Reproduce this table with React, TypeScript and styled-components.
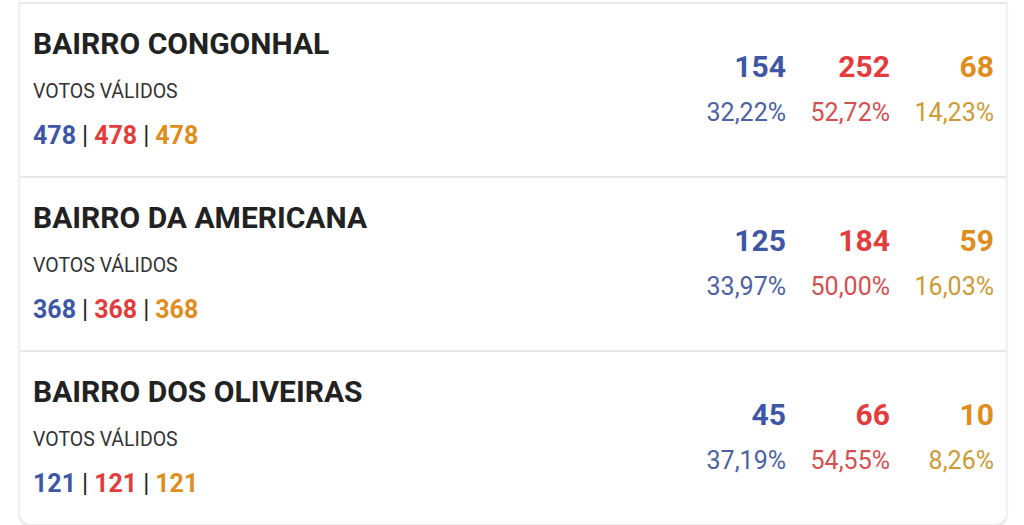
import styled, { createGlobalStyle } from 'styled-components';

const GlobalStyle = createGlobalStyle`
  body {
    margin: 0;
    background: #ffffff;
    font-family: Roboto, "Liberation Sans", Arial, sans-serif;
  }
`;

const colors = {
  blue: '#3d57a6',
  red: '#e23c3c',
  orange: '#df8d1c',
  blueSoft: '#4b62a6',
  redSoft: '#d64f4f',
  orangeSoft: '#cf9a35',
};

type Party = 'blue' | 'red' | 'orange';

const Page = styled.div`
  padding: 0 17px 4px 19px;
`;

const Card = styled.div`
  background: #ffffff;
  border: 1px solid #ececec;
  border-top: none;
  border-radius: 0 0 12px 12px;
  box-shadow: 0 2px 3px rgba(0, 0, 0, 0.12);
  padding-top: 2px;
`;

const Row = styled.div`
  display: flex;
  align-items: center;
  justify-content: space-between;
  height: 172px;
  padding: 0 12px 0 13px;
  border-top: 2px solid #e8e8e8;
`;

const Info = styled.div`
  display: flex;
  flex-direction: column;
  padding-bottom: 2px;
`;

const Title = styled.h2`
  margin: 0;
  font-size: 30px;
  line-height: 34px;
  font-weight: 700;
  color: #222222;
`;

const Subtitle = styled.div`
  margin-top: 20px;
  font-size: 19.5px;
  line-height: 22px;
  color: #333333;
`;

const Totals = styled.div`
  margin-top: 18px;
  font-size: 25px;
  line-height: 30px;
  font-weight: 700;
  color: #222222;
`;

const Total = styled.span<{ $party: Party }>`
  color: ${p => colors[p.$party]};
`;

const Sep = styled.span`
  font-weight: 400;
  margin: 0 6px;
`;

const Results = styled.div`
  display: flex;
  padding-bottom: 4px;
`;

const Column = styled.div`
  width: 104px;
  display: flex;
  flex-direction: column;
  align-items: flex-end;
`;

const Votes = styled.div<{ $party: Party }>`
  font-size: 30px;
  line-height: 34px;
  font-weight: 700;
  color: ${p => colors[p.$party]};
`;

const Percent = styled.div<{ $party: Party }>`
  margin-top: 15px;
  font-size: 25px;
  line-height: 28px;
  color: ${p => colors[(p.$party + 'Soft') as keyof typeof colors]};
`;

interface Bairro {
  name: string;
  total: number;
  votes: [number, number, number];
  percents: [string, string, string];
}

const bairros: Bairro[] = [
  { name: 'BAIRRO CONGONHAL', total: 478, votes: [154, 252, 68], percents: ['32,22%', '52,72%', '14,23%'] },
  { name: 'BAIRRO DA AMERICANA', total: 368, votes: [125, 184, 59], percents: ['33,97%', '50,00%', '16,03%'] },
  { name: 'BAIRRO DOS OLIVEIRAS', total: 121, votes: [45, 66, 10], percents: ['37,19%', '54,55%', '8,26%'] },
];

const parties: Party[] = ['blue', 'red', 'orange'];

export default function App() {
  return (
    <>
      <GlobalStyle />
      <Page>
        <Card>
          {bairros.map(b => (
            <Row key={b.name}>
              <Info>
                <Title>{b.name}</Title>
                <Subtitle>VOTOS VÁLIDOS</Subtitle>
                <Totals>
                  <Total $party="blue">{b.total}</Total>
                  <Sep>|</Sep>
                  <Total $party="red">{b.total}</Total>
                  <Sep>|</Sep>
                  <Total $party="orange">{b.total}</Total>
                </Totals>
              </Info>
              <Results>
                {parties.map((p, i) => (
                  <Column key={p}>
                    <Votes $party={p}>{b.votes[i]}</Votes>
                    <Percent $party={p}>{b.percents[i]}</Percent>
                  </Column>
                ))}
              </Results>
            </Row>
          ))}
        </Card>
      </Page>
    </>
  );
}
